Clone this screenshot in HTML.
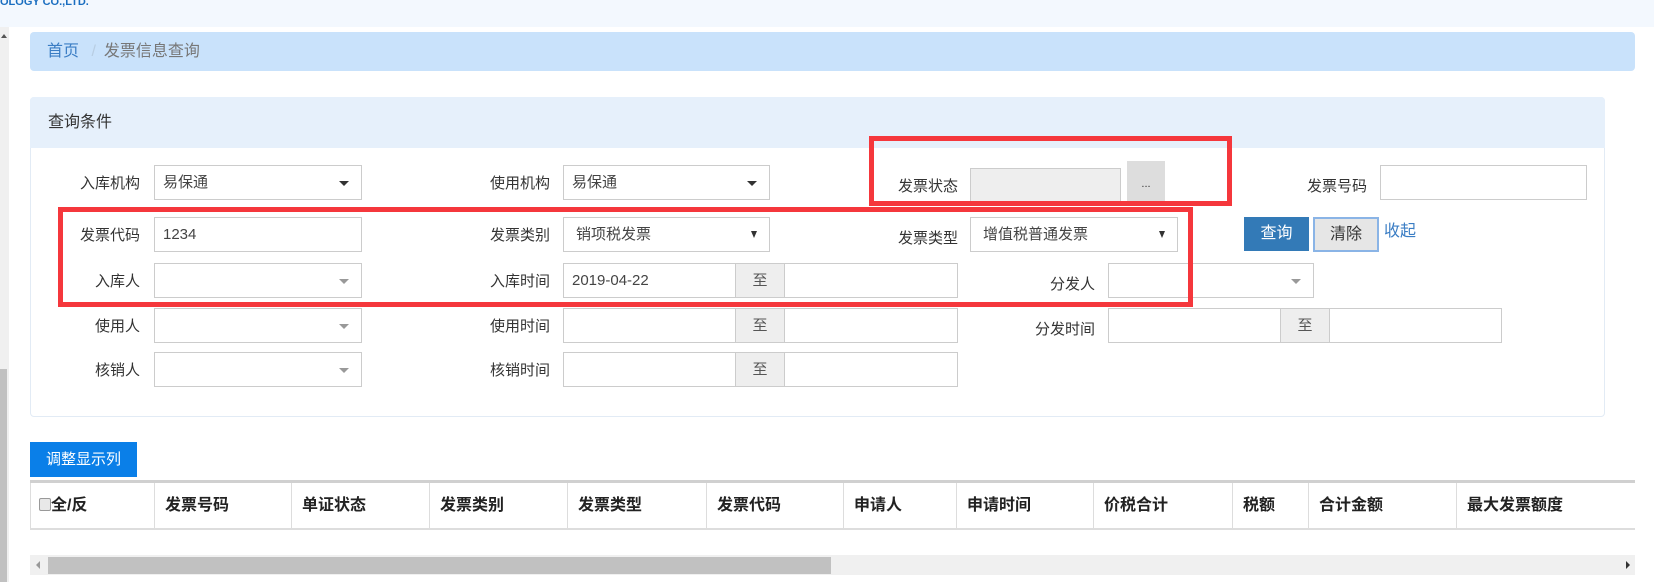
<!DOCTYPE html>
<html><head><meta charset="utf-8"><style>
*{box-sizing:border-box;margin:0;padding:0}
body{width:1654px;height:582px;position:relative;overflow:hidden;background:#fff;font-family:"Liberation Sans","Noto Sans CJK SC",sans-serif;font-size:15px;color:#333}
.a{position:absolute}
.inp{position:absolute;border:1px solid #ccc;background:#fff;height:35px;padding-left:8px;line-height:33px;font-size:15px;color:#444}
.lbl{position:absolute;text-align:right;width:100px;line-height:37px;font-size:15px;color:#333}
.car{position:absolute;right:12px;top:15px;width:0;height:0;border-left:5px solid transparent;border-right:5px solid transparent;border-top:5px solid #333}
.car.g{border-top-color:#999}
.to{position:absolute;background:#eee;border:1px solid #ccc;height:35px;text-align:center;line-height:33px;color:#555}
.red{position:absolute;border:5px solid #f5373c}
.th{position:absolute;top:483px;height:45px;line-height:45px;font-weight:bold;font-size:16px;color:#222;padding-left:10px;border-left:1px solid #ddd}
</style></head><body>
<div class="a" style="left:0;top:0;width:1654px;height:27px;background:#f3f8fe"></div>
<div class="a" style="left:0;top:-4px;font-size:11px;color:#1a6ec0;font-weight:bold">OLOGY CO.,LTD.</div>
<div class="a" style="left:0;top:27px;width:9px;height:555px;background:#f0f0f0"></div>
<div class="a" style="left:0;top:369px;width:7px;height:213px;background:#c1c1c1"></div>
<div class="a" style="left:1px;top:34px;width:0;height:0;border-left:3px solid transparent;border-right:3px solid transparent;border-bottom:4px solid #555"></div>

<div class="a" style="left:30px;top:32px;width:1605px;height:39px;background:#c9e2fb;border-radius:4px"></div>
<div class="a" style="left:47px;top:32px;line-height:39px;font-size:16px;color:#3a7dc4">首页 <span style="color:#b8cde2;margin:0 8px">/</span><span style="color:#777">发票信息查询</span></div>

<div class="a" style="left:30px;top:97px;width:1575px;height:320px;border:1px solid #e2ebf5;border-radius:4px;background:#fff"></div>
<div class="a" style="left:30px;top:97px;width:1575px;height:51px;background:#e6f0fb;border-radius:4px 4px 0 0"></div>
<div class="a" style="left:48px;top:97px;line-height:51px;font-size:16px;color:#333">查询条件</div>

<div class="lbl" style="left:40px;top:165px">入库机构</div>
<div class="inp" style="left:154px;top:165px;width:208px">易保通<span class="car"></span></div>
<div class="lbl" style="left:450px;top:165px">使用机构</div>
<div class="inp" style="left:563px;top:165px;width:207px">易保通<span class="car"></span></div>
<div class="lbl" style="left:858px;top:168px">发票状态</div>
<div class="inp" style="left:970px;top:168px;width:151px;background:#eee"></div>
<div class="a" style="left:1127px;top:161px;width:38px;height:43px;background:#ddd;text-align:center;line-height:46px;font-size:11px">...</div>
<div class="lbl" style="left:1267px;top:168px">发票号码</div>
<div class="inp" style="left:1380px;top:165px;width:207px"></div>

<div class="lbl" style="left:40px;top:217px">发票代码</div>
<div class="inp" style="left:154px;top:217px;width:208px">1234</div>
<div class="lbl" style="left:450px;top:217px">发票类别</div>
<div class="inp" style="left:563px;top:217px;width:207px;padding-left:12px">销项税发票<span class="car" style="border-top-width:7px;border-left-width:3px;border-right-width:3px;top:13px"></span></div>
<div class="lbl" style="left:858px;top:220px">发票类型</div>
<div class="inp" style="left:970px;top:217px;width:208px;padding-left:12px">增值税普通发票<span class="car" style="border-top-width:7px;border-left-width:3px;border-right-width:3px;top:13px"></span></div>
<div class="a" style="left:1244px;top:217px;width:65px;height:34px;background:#337ab7;color:#fff;text-align:center;line-height:34px;font-size:16px">查询</div>
<div class="a" style="left:1313px;top:217px;width:66px;height:35px;background:#e6e6e6;border:2px solid #8ab4e6;text-align:center;line-height:31px;font-size:16px">清除</div>
<div class="a" style="left:1384px;top:216px;line-height:32px;font-size:16px;color:#3a7dc4">收起</div>

<div class="lbl" style="left:40px;top:263px">入库人</div>
<div class="inp" style="left:154px;top:263px;width:208px"><span class="car g"></span></div>
<div class="lbl" style="left:450px;top:263px">入库时间</div>
<div class="inp" style="left:563px;top:263px;width:173px">2019-04-22</div>
<div class="to" style="left:735px;top:263px;width:50px">至</div>
<div class="inp" style="left:784px;top:263px;width:174px"></div>
<div class="lbl" style="left:995px;top:266px">分发人</div>
<div class="inp" style="left:1108px;top:263px;width:206px"><span class="car g"></span></div>

<div class="lbl" style="left:40px;top:308px">使用人</div>
<div class="inp" style="left:154px;top:308px;width:208px"><span class="car g"></span></div>
<div class="lbl" style="left:450px;top:308px">使用时间</div>
<div class="inp" style="left:563px;top:308px;width:173px"></div>
<div class="to" style="left:735px;top:308px;width:50px">至</div>
<div class="inp" style="left:784px;top:308px;width:174px"></div>
<div class="lbl" style="left:995px;top:311px">分发时间</div>
<div class="inp" style="left:1108px;top:308px;width:173px"></div>
<div class="to" style="left:1280px;top:308px;width:50px">至</div>
<div class="inp" style="left:1329px;top:308px;width:173px"></div>

<div class="lbl" style="left:40px;top:352px">核销人</div>
<div class="inp" style="left:154px;top:352px;width:208px"><span class="car g"></span></div>
<div class="lbl" style="left:450px;top:352px">核销时间</div>
<div class="inp" style="left:563px;top:352px;width:173px"></div>
<div class="to" style="left:735px;top:352px;width:50px">至</div>
<div class="inp" style="left:784px;top:352px;width:174px"></div>

<div class="red" style="left:869px;top:136px;width:363px;height:70px"></div>
<div class="red" style="left:58px;top:207px;width:1135px;height:100px"></div>

<div class="a" style="left:30px;top:442px;width:107px;height:35px;background:#0a7fe8;color:#fff;text-align:center;line-height:35px;font-size:15px">调整显示列</div>

<div class="a" style="left:30px;top:480px;width:1605px;height:3px;background:#d0d0d0"></div>
<div class="a" style="left:30px;top:528px;width:1605px;height:2px;background:#ddd"></div>
<div class="th" style="left:30px;padding-left:8px"><span style="display:inline-block;width:12px;height:13px;border:1px solid #999;border-radius:2px;background:#e8e8e8;vertical-align:-1px"></span>全/反</div>
<div class="th" style="left:154px">发票号码</div>
<div class="th" style="left:291px">单证状态</div>
<div class="th" style="left:429px">发票类别</div>
<div class="th" style="left:567px">发票类型</div>
<div class="th" style="left:706px">发票代码</div>
<div class="th" style="left:843px">申请人</div>
<div class="th" style="left:956px">申请时间</div>
<div class="th" style="left:1093px">价税合计</div>
<div class="th" style="left:1232px">税额</div>
<div class="th" style="left:1308px">合计金额</div>
<div class="th" style="left:1456px">最大发票额度</div>

<div class="a" style="left:30px;top:555px;width:1605px;height:20px;background:#f0f0f0"></div>
<div class="a" style="left:48px;top:557px;width:783px;height:17px;background:#c1c1c1"></div>
<div class="a" style="left:36px;top:561px;width:0;height:0;border-top:4px solid transparent;border-bottom:4px solid transparent;border-right:4px solid #999"></div>
<div class="a" style="left:1626px;top:561px;width:0;height:0;border-top:4px solid transparent;border-bottom:4px solid transparent;border-left:4px solid #333"></div>
</body></html>
